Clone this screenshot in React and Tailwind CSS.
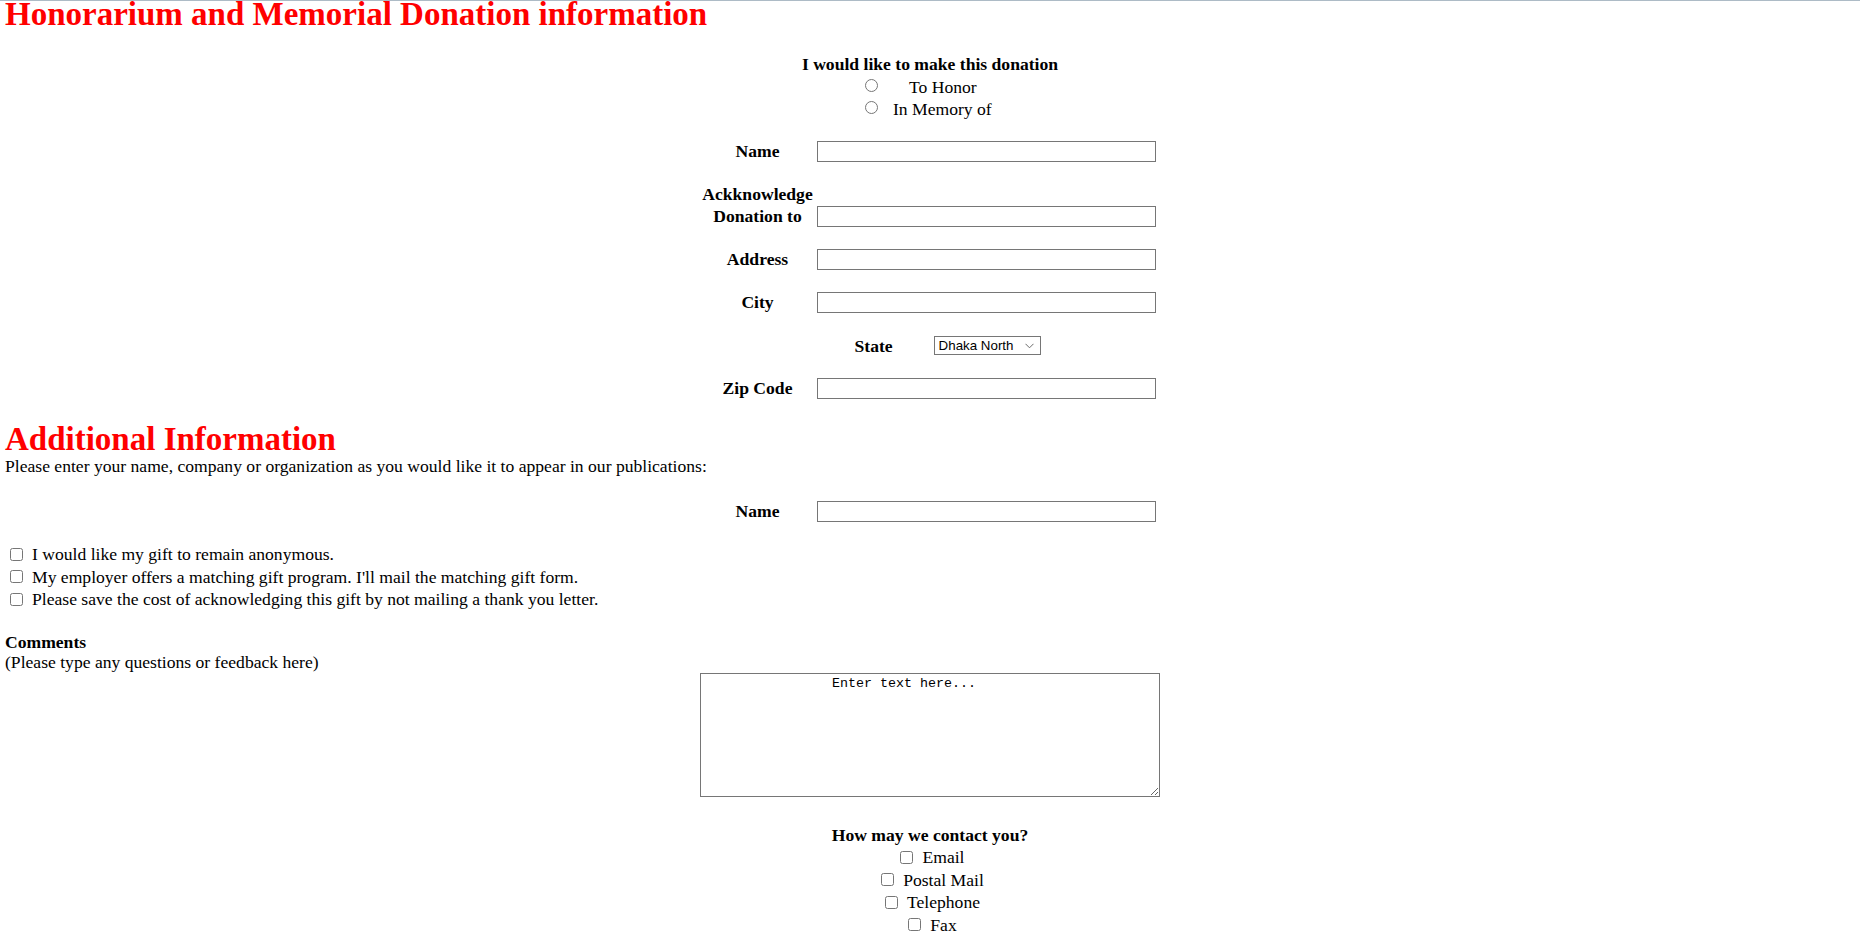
import React from 'react';

const inputCls = 'h-[21px] w-[339px] border border-[#767676] bg-white px-[2px] text-[13.33px] font-["Liberation_Sans",sans-serif]';

const FieldRow = ({ label, align = 'items-center', lead = 'leading-[21px]', children }) => (
  <div className={`grid grid-cols-[114px_339px] gap-x-[2px] ${align}`}>
    <div className={`text-center font-bold ${lead}`}>{label}</div>
    {children || <input type="text" className={inputCls} />}
  </div>
);

const CheckLine = ({ children, center }) => (
  <label className={`flex h-[22.5px] items-center ${center ? 'justify-center' : ''}`}>
    <input type="checkbox" className="ml-[5px] h-[13px] w-[13px]" />
    <span className="ml-[9px]">{children}</span>
  </label>
);

const App = () => {
  return (
    <div className="min-h-[938px] border-t border-[#adbbc6] bg-white px-[5px] font-['Liberation_Serif',serif] text-[17.6px] leading-[20px] text-black">
      <h1 className="text-[33px] font-bold leading-[26px] text-[#ff0000]">
        Honorarium and Memorial Donation information
      </h1>

      {/* donation type */}
      <div className="mt-[25.75px] text-center">
        <div className="font-bold leading-[22.5px]">I would like to make this donation</div>
        <div className="mx-auto w-[138px] text-left">
          <label className="flex h-[22.5px] items-center">
            <input type="radio" name="kind" className="mb-[3px] ml-[4px] h-[13px] w-[13px]" />
            <span className="ml-[31px]">To Honor</span>
          </label>
          <label className="flex h-[22.5px] items-center">
            <input type="radio" name="kind" className="mb-[3px] ml-[4px] h-[13px] w-[13px]" />
            <span className="ml-[15px]">In Memory of</span>
          </label>
        </div>
      </div>

      <div className="mx-auto mt-[20.75px] flex w-[459px] flex-col gap-[22px]">
        <FieldRow label="Name" />
        <FieldRow
          align="items-end"
          lead="leading-[21.5px]"
          label={
            <>
              Ackknowledge
              <br />
              Donation to
            </>
          }
        />
        <FieldRow label="Address" />
        <FieldRow label="City" />
        <div className="flex h-[21px] items-center pl-[154px]">
          <span className="font-bold">State</span>
          <div className="ml-[41px] flex h-[19px] w-[107px] items-center border border-[#767676] bg-white">
            <select
              defaultValue="Dhaka North"
              className="h-full min-w-0 flex-1 appearance-none bg-transparent pl-[4px] font-['Liberation_Sans',sans-serif] text-[13.33px] leading-[17px] outline-none"
            >
              <option>Dhaka North</option>
              <option>Dhaka South</option>
              <option>Chittagong</option>
              <option>Sylhet</option>
            </select>
            <svg width="9" height="6" viewBox="0 0 9 6" className="mr-[6px]" fill="none">
              <path d="M0.5 0.8 L4.5 4.8 L8.5 0.8" stroke="#6b6b6b" strokeWidth="1" />
            </svg>
          </div>
        </div>
        <FieldRow label="Zip Code" />
      </div>

      <h2 className="mt-[27px] text-[33px] font-bold leading-[26px] text-[#ff0000]">Additional Information</h2>
      <p className="mt-[4px]">
        Please enter your name, company or organization as you would like it to appear in our publications:
      </p>

      <div className="mx-auto mt-[25px] w-[459px]">
        <FieldRow label="Name" />
      </div>

      <div className="mt-[20.75px]">
        <CheckLine>I would like my gift to remain anonymous.</CheckLine>
        <CheckLine>My employer offers a matching gift program. I'll mail the matching gift form.</CheckLine>
        <CheckLine>Please save the cost of acknowledging this gift by not mailing a thank you letter.</CheckLine>
      </div>

      <div className="mt-[21.5px]">
        <div className="font-bold">Comments</div>
        <div>(Please type any questions or feedback here)</div>
      </div>

      <textarea
        defaultValue="Enter text here..."
        className="mx-auto mt-[1.5px] block h-[124px] w-[460px] border border-[#767676] bg-white py-[2px] pl-[2px] pr-[54px] text-center font-['Liberation_Mono',monospace] text-[13.33px] leading-[15px] text-black"
      />

      <div className="mt-[27.5px] text-center">
        <div className="font-bold">How may we contact you?</div>
        <div className="mt-[1px]">
          <CheckLine center>Email</CheckLine>
          <CheckLine center>Postal Mail</CheckLine>
          <CheckLine center>Telephone</CheckLine>
          <CheckLine center>Fax</CheckLine>
        </div>
      </div>
    </div>
  );
};

export default App;
